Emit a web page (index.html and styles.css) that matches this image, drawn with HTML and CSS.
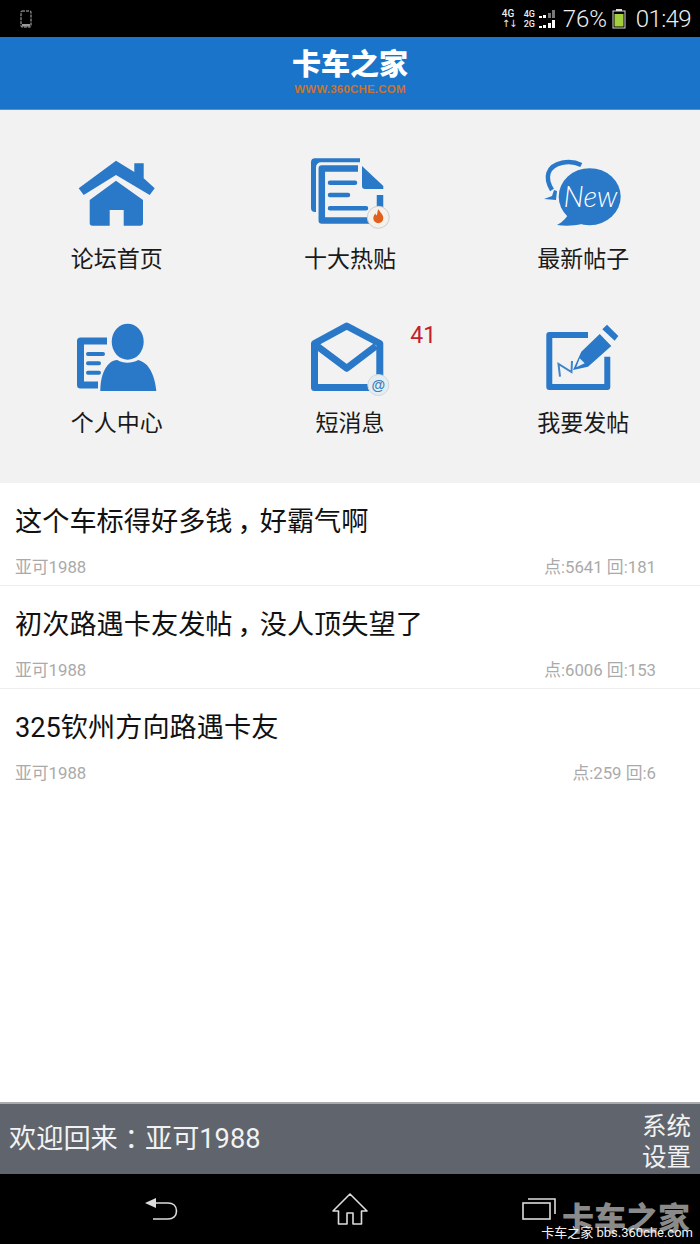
FILE: index.html
```html
<!DOCTYPE html>
<html lang="zh-CN">
<head>
<meta charset="utf-8">
<title>卡车之家</title>
<link rel="stylesheet" href="styles.css">
</head>
<body>
<div class="page">
  <div class="status">
    <svg class="phone" width="12" height="18" viewBox="0 0 12 18"><rect x="1" y="1" width="10" height="16" rx="1" fill="none" stroke="#bbb" stroke-width="1" stroke-dasharray="3 1"/><rect x="2" y="14" width="8" height="2.5" fill="#999"/></svg>
    <div class="status-right">
      <div class="net"><span>4G</span><span class="arrows">↑↓</span></div>
      <div class="net net-b"><div class="sig"><span>4G</span><svg width="17" height="9" viewBox="0 0 17 9"><rect x="0" y="6" width="3" height="2" fill="#fff"/><rect x="4" y="5" width="3" height="3" fill="#fff"/><rect x="9" y="3" width="3" height="5" fill="#777"/><rect x="13" y="0" width="3" height="8" fill="#777"/></svg></div><div class="sig"><span>2G</span><svg width="17" height="9" viewBox="0 0 17 9"><rect x="0" y="6" width="3" height="2" fill="#fff"/><rect x="4" y="5" width="3" height="3" fill="#fff"/><rect x="9" y="3" width="3" height="5" fill="#fff"/><rect x="13" y="0" width="3" height="8" fill="#fff"/></svg></div></div>
      <span class="pct">76%</span>
      <svg class="batt" width="14" height="20" viewBox="0 0 14 20"><rect x="4" y="0" width="6" height="2" fill="#ddd"/><rect x="1" y="2" width="12" height="17" fill="none" stroke="#ddd" stroke-width="1"/><rect x="2.5" y="5" width="9" height="12.5" fill="#a4cf3c"/></svg>
      <span class="time">01:49</span>
    </div>
  </div>

  <header class="brand">
    <div class="logo">卡车之家</div>
    <div class="logo-sub">WWW.360CHE.COM</div>
  </header>

  <nav class="grid">
    <a class="cell">
      <svg class="ico" viewBox="0 0 80 72"><path fill="#2a78c8" d="M39 2.700 57.300 14V5.300h9.400v15l11 10-5 6.700L39 17 6.700 37l-5-6.700z"/><path fill="#2a78c8" d="M39 22.700 66 42v23a2.700 2.700 0 0 1-2.700 2.700H46.700V52H32.700V67.700H15.400a2.700 2.700 0 0 1-2.700-2.700V42z"/></svg>
      <span class="label">论坛首页</span>
    </a>
    <a class="cell">
      <svg class="ico" viewBox="0 0 80 72"><path fill="#2a78c8" d="M5 .3h45v4H11a5 5 0 0 0-5 5v44.700H5a4 4 0 0 1-4-4V4.300a4 4 0 0 1 4-4z"/><path fill="none" stroke="#2a78c8" stroke-width="6.500" stroke-linejoin="round" d="M70 37v25.500H11.800V10.500H48"/><path fill="#2a78c8" d="M52 8 73.300 28v3H55a3 3 0 0 1-3-3z"/><path fill="none" stroke="#2a78c8" stroke-width="4.500" stroke-linecap="round" d="M20 24.700h25M20 37h18M20 50.300h36"/><circle cx="68.300" cy="59.300" r="11" fill="#f4f1ec" stroke="#cfcfcf" stroke-width="1"/><path fill="#e2601e" d="M68.500 51c1 3 4.800 5 4.800 9.300a5 5 0 0 1-10 0c0-2.300 1.200-3.300 2-4.800.5 1 .9 1.600 1.500 2 .7-2 .5-4.500 1.700-6.500z"/></svg>
      <span class="label">十大热贴</span>
    </a>
    <a class="cell">
      <svg class="ico" viewBox="0 0 80 72"><path fill="none" stroke="#2a78c8" stroke-width="4.500" d="M38.300 7C27 1.500 9.500 4 5.500 15c-2 6 .5 12 3.500 17"/><path fill="#2a78c8" d="M1 41l8-3 2-6 3 1-1 9z"/><ellipse cx="46.700" cy="38.700" rx="31" ry="28.500" fill="#2a78c8"/><path fill="#2a78c8" d="M14 67c6-3 10-8 13-13l12 12c-9 2-17 2-25 1z"/><text class="new" x="47.500" y="48.500" text-anchor="middle">New</text></svg>
      <span class="label">最新帖子</span>
    </a>
    <a class="cell">
      <svg class="ico" viewBox="0 0 80 72"><path fill="none" stroke="#2a78c8" stroke-width="7" stroke-linejoin="round" d="M30 19H3.500v44H21"/><path fill="none" stroke="#2a78c8" stroke-width="4" stroke-linecap="round" d="M11 32h15M11 41.300h11M11 50.700h11"/><ellipse cx="50.700" cy="19.700" rx="16" ry="18" fill="#2a78c8"/><path fill="#2a78c8" d="M23.300 69c0-12 3-22 9-27.500 2-2 5-3.500 8-3.500 6 3.500 14 3.500 21 0 3.500 1 6.500 3 9 5.500 5 6 8 15 9 25.500z"/></svg>
      <span class="label">个人中心</span>
    </a>
    <a class="cell">
      <svg class="ico" viewBox="0 0 80 72"><path fill="none" stroke="#2a78c8" stroke-width="7" stroke-linejoin="round" d="M4.500 21.500 36.700 4l33.100 17.500v44H4.500z"/><path fill="none" stroke="#2a78c8" stroke-width="7" stroke-linejoin="round" d="M7 24l29.700 22.300L66 24"/><circle cx="68.300" cy="63" r="10.500" fill="#e4eef2" stroke="#cfd8dc" stroke-width="1"/><text class="at" x="68.300" y="68" text-anchor="middle">@</text></svg>
      <span class="label">短消息</span>
      <span class="badge">41</span>
    </a>
    <a class="cell">
      <svg class="ico" viewBox="0 0 80 72"><path fill="none" stroke="#2a78c8" stroke-width="6" stroke-linejoin="round" d="M45 13H6.300v52h58V34.700"/><path fill="#2a78c8" d="M30 48l8.300-18.300L56.700 12l11.600 12L45 44.700z"/><path fill="#2a78c8" d="M64 2.700 75.300 14l-3.600 4.700L59.300 7.300z"/><path fill="#e8eef5" d="M33.300 45.300 36.700 36.300l5 5z"/><path fill="none" stroke="#3f86c9" stroke-width="2" d="M17 54.700 15.500 42l13 8 .5-11"/></svg>
      <span class="label">我要发帖</span>
    </a>
  </nav>

  <main class="list">
    <article class="row">
      <h2 class="title">这个车标得好多钱<span class="fw">，</span>好霸气啊</h2>
      <div class="meta"><span>亚可1988</span><span>点:5641 回:181</span></div>
    </article>
    <article class="row">
      <h2 class="title">初次路遇卡友发帖<span class="fw">，</span>没人顶失望了</h2>
      <div class="meta"><span>亚可1988</span><span>点:6006 回:153</span></div>
    </article>
    <article class="row row-plain">
      <h2 class="title">325钦州方向路遇卡友</h2>
      <div class="meta"><span>亚可1988</span><span>点:259 回:6</span></div>
    </article>
  </main>

  <footer class="welcome">
    <span class="welcome-text">欢迎回来<span class="fw">：</span>亚可1988</span>
    <span class="settings">系统<br>设置</span>
  </footer>

  <div class="nav">
    <svg width="34" height="24" viewBox="0 0 34 24"><path fill="none" stroke="#ddd" stroke-width="1.600" d="M9 6h15c5 0 8.500 3 8.500 8s-3.500 8-8.500 8H9"/><path fill="#ddd" d="M1 6l11-5v10z"/></svg>
    <svg width="36" height="32" viewBox="0 0 36 32"><path fill="none" stroke="#ddd" stroke-width="1.600" stroke-linejoin="round" d="M18 1 35 18h-5.500v13H21V20h-6v11H6.500V18H1z"/></svg>
    <svg width="34" height="24" viewBox="0 0 34 24"><rect x="1" y="6" width="27" height="16" fill="none" stroke="#ddd" stroke-width="1.600"/><path fill="none" stroke="#ddd" stroke-width="1.600" d="M6 2h27v15"/></svg>
    <div class="mark">
      <span class="mark-big">卡车之家</span>
      <span class="mark-small">卡车之家 bbs.360che.com</span>
    </div>
  </div>
</div>
</body>
</html>
```

FILE: styles.css
```css
* { box-sizing: border-box; }
html, body { margin: 0; padding: 0; }
body { font-family: Roboto, "Noto Sans CJK SC", sans-serif; background: #fff; color: #111; }
.page { width: 700px; height: 1244px; display: flex; flex-direction: column; overflow: hidden; }

.status { height: 37px; background: #000; color: #eee; display: flex; align-items: center; justify-content: space-between; padding: 0 9px 0 20px; flex: none; }
.status-right { display: flex; align-items: center; }
.net { display: flex; flex-direction: column; font-size: 10px; line-height: 10px; width: 22px; font-weight: 500; }
.arrows { font-size: 10px; letter-spacing: -1px; font-family: "DejaVu Sans", sans-serif; }
.net-b { width: 32px; font-size: 9px; }
.sig { display: flex; justify-content: space-between; align-items: flex-end; height: 10px; }
.pct { font-size: 24px; font-weight: 300; margin-left: 7px; width: 42px; }
.batt { margin-left: 7px; }
.time { font-size: 24px; font-weight: 300; margin-left: 10px; letter-spacing: -.6px; }

.brand { height: 73px; background: #1a75ca; border-bottom: 1px solid #3c9ad6; flex: none; display: flex; flex-direction: column; align-items: center; padding-top: 12px; }
.logo { font-size: 29px; line-height: 32px; font-weight: 900; color: #fff; }
.logo-sub { font-family: "Liberation Sans", sans-serif; font-size: 11.500px; line-height: 12px; font-weight: 700; color: #c9742f; margin-top: 2px; letter-spacing: .2px; }

.grid { background: #f2f2f2; flex: none; display: grid; grid-template-columns: repeat(3, 1fr); row-gap: 47px; padding: 48px 0 44px; }
.cell { position: relative; display: flex; flex-direction: column; align-items: center; }
.ico { width: 80px; height: 72px; display: block; overflow: visible; }
.label { font-size: 23px; line-height: 30px; margin-top: 15px; color: #1a1a1a; }
.new { font-family: "Lato", sans-serif; font-style: italic; font-weight: 300; font-size: 29px; fill: #fff; }
.at { font-family: "Liberation Sans", sans-serif; font-size: 14px; font-weight: 700; fill: #3a7fbf; }
.badge { position: absolute; left: 177px; top: 0; font-size: 23px; line-height: 28px; color: #c2202c; }

.list { flex: 1; background: #fff; }
.row { height: 103px; border-bottom: 1px solid #eee; padding: 21px 44px 0 15px; }
.row-plain { border-bottom: 0; }
.title { margin: 0; font-size: 27.200px; line-height: 36px; font-weight: 400; color: #111; }
.meta { display: flex; justify-content: space-between; font-size: 16.800px; line-height: 20px; color: #aaa; margin-top: 17px; }
.fw { display: inline-block; width: 1em; text-align: center; font-feature-settings: "palt"; }

.welcome { height: 72px; background: #5f646d; border-top: 2px solid #a9abae; flex: none; display: flex; align-items: center; justify-content: space-between; padding: 0 9px; color: #f2f2f2; }
.welcome-text { font-size: 27.200px; padding-bottom: 6px; }
.settings { font-size: 24.500px; line-height: 31px; padding-top: 5px; }

.nav { position: relative; height: 70px; background: #000; flex: none; display: flex; align-items: center; padding: 0 144px; justify-content: space-between; }
.mark { position: absolute; right: 7px; top: 28px; display: flex; flex-direction: column; align-items: flex-end; }
.mark-big { font-size: 32px; line-height: 34px; font-weight: 900; color: #8a8a8a; margin-right: 3px; }
.mark-small { position: absolute; top: 23px; right: 0; white-space: nowrap; font-size: 13px; line-height: 16px; color: #f2f2f2; }
```
